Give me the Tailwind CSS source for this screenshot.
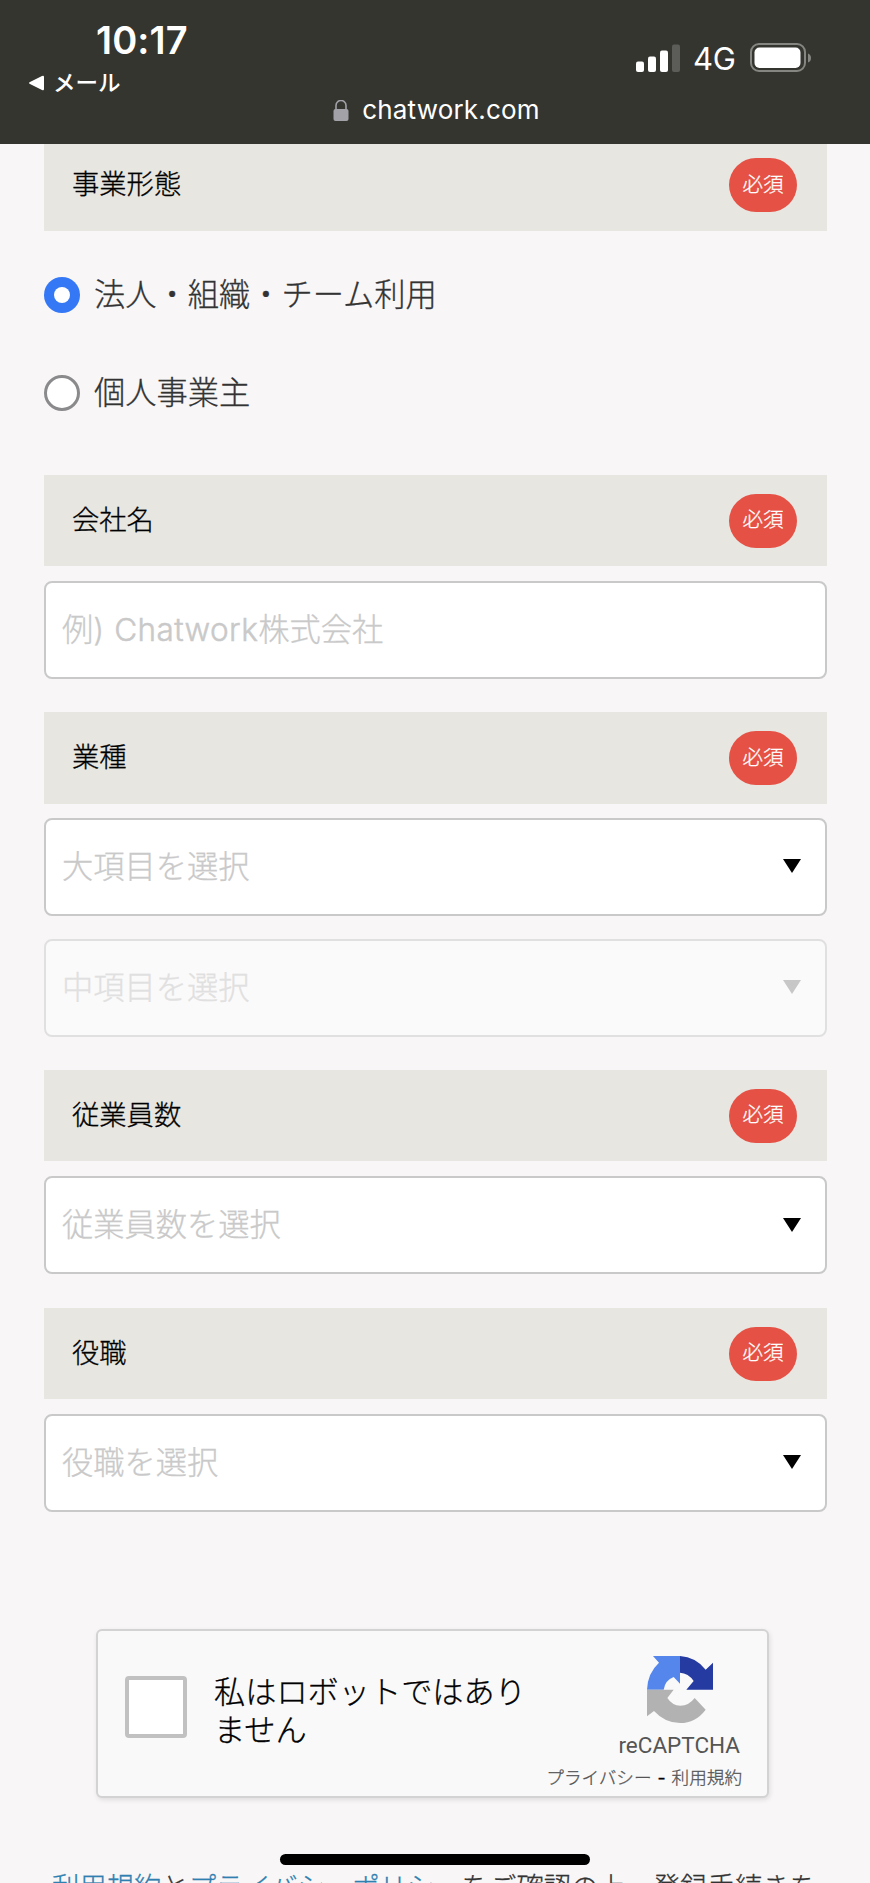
<!DOCTYPE html>
<html lang="ja">
<head>
<meta charset="utf-8">
<title>Chatwork</title>
<script src="https://cdn.jsdelivr.net/npm/@tailwindcss/browser@4"></script>
</head>
<body class="bg-[#f8f6f7]">
<div class="relative flex h-[1883px] w-[870px] flex-col overflow-hidden font-['Inter','Noto_Sans_CJK_JP',sans-serif] font-light text-black">

  <!-- status bar -->
  <header class="flex h-[144px] shrink-0 flex-col bg-[#353530] text-white">
    <div class="flex h-[92px] justify-between">
      <div class="flex flex-col pl-[28px] pt-[19px]">
        <span class="pl-[68px] text-[38px] leading-[42px] font-semibold tracking-[0.1px]">10:17</span>
        <span class="mt-[2px] flex items-center gap-[8px] text-[22.5px] leading-[40px] font-medium">
          <svg class="h-[16px] w-[17px]" viewBox="0 0 17 16"><path d="M2 7 14 1Q16 0 16 2V14Q16 16 14 15L2 9Q0 8 2 7Z" fill="#fff"/></svg>メール</span>
      </div>
      <div class="flex h-[30px] mt-[43px] items-center pr-[58px]">
        <svg class="h-[28px] w-[45px]" viewBox="0 0 45 28" fill="#fff"><rect x="1" y="17.500" width="8" height="10.500" rx="2"/><rect x="13" y="12.500" width="8" height="15.500" rx="2"/><rect x="25" y="6.500" width="8" height="21.500" rx="2"/><rect x="37" y="0.500" width="8" height="27.500" rx="2" fill="#5c5c58"/></svg>
        <span class="ml-[13px] w-[43px] pt-[2px] text-[31px] leading-[30px] font-normal tracking-[-0.2px]">4G</span>
        <svg class="ml-[14px] h-[30px] w-[62px]" viewBox="0 0 62 30"><rect x="1" y="1" width="54" height="27" rx="8" fill="none" stroke="#858581" stroke-width="2"/><rect x="4.500" y="4.500" width="46" height="20.500" rx="5" fill="#fff"/><path d="M58 10.500Q61 11.500 61 15T58 19.500Z" fill="#858581"/></svg>
      </div>
    </div>
    <div class="flex items-center justify-center gap-[13px] pl-[3px] text-[26px] leading-[36px] font-normal tracking-[0.2px]">
      <svg class="h-[21px] w-[16px]" viewBox="0 0 16 21"><path d="M3 10V5.500a5 5 0 0 1 10 0V10" fill="none" stroke="#a2a2a8" stroke-width="1.600"/><rect x="0.500" y="9" width="15" height="12" rx="2" fill="#a2a2a8"/></svg>
      <span>chatwork.com</span>
    </div>
  </header>

  <main class="flex flex-col pl-[44px] pr-[43px] [-webkit-text-stroke-width:0.3px]">
    <div class="flex h-[87px] items-start justify-between bg-[#e7e6e0] pl-[28px] pr-[30px] pt-[14px]">
      <span class="text-[27.300px] leading-[54px]">事業形態</span>
      <span class="flex h-[54px] w-[68px] items-center justify-center rounded-full bg-[#e55145] text-[20.500px] text-white">必須</span>
    </div>

    <label class="mt-[46px] flex h-[36px] items-center gap-[14px] text-[31.250px] leading-[36px] text-[#333]">
      <span class="flex size-[36px] items-center justify-center rounded-full bg-[#3478f6]"><span class="size-[16px] rounded-full bg-white"></span></span>法人・組織・チーム利用
    </label>
    <label class="mt-[62px] flex h-[36px] items-center gap-[14px] text-[31.250px] leading-[36px] text-[#333]">
      <span class="size-[36px] rounded-full border-[3px] border-[#8a8a8c] bg-white"></span>個人事業主
    </label>

    <div class="mt-[64px] flex h-[91px] items-center justify-between bg-[#e7e6e0] pl-[28px] pr-[30px]">
      <span class="text-[27.300px] leading-[54px]">会社名</span>
      <span class="flex h-[54px] w-[68px] items-center justify-center rounded-full bg-[#e55145] text-[20.500px] text-white">必須</span>
    </div>
    <div class="mt-[15px] flex h-[98px] items-center rounded-lg border-2 border-[#c9c9c9] bg-white pl-[16px] text-[31.250px] text-[#c9c9c9]">例) <span class="ml-[10px] text-[31.500px] tracking-[0.4px] [-webkit-text-stroke-width:0.5px]">Chatwork</span>株式会社</div>

    <div class="mt-[33px] flex h-[92px] items-center justify-between bg-[#e7e6e0] pl-[28px] pr-[30px]">
      <span class="text-[27.300px] leading-[54px]">業種</span>
      <span class="flex h-[54px] w-[68px] items-center justify-center rounded-full bg-[#e55145] text-[20.500px] text-white">必須</span>
    </div>
    <div class="mt-[14px] flex h-[98px] items-center justify-between rounded-lg border-2 border-[#c9c9c9] bg-white pl-[16px] pr-[24px] text-[31.250px] text-[#c9c9c9]">大項目を選択
      <svg class="mb-[2px] h-[14px] w-[18px]" viewBox="0 0 18 14"><path d="M0 0H18L9 14Z" fill="#000"/></svg></div>
    <div class="mt-[23px] flex h-[98px] items-center justify-between rounded-lg border-2 border-[#e1e0e0] bg-[#fbfafa] pl-[16px] pr-[24px] text-[31.250px] text-[#e0e0e0]">中項目を選択
      <svg class="mb-[2px] h-[14px] w-[18px]" viewBox="0 0 18 14"><path d="M0 0H18L9 14Z" fill="#c7c7c7"/></svg></div>

    <div class="mt-[33px] flex h-[91px] items-center justify-between bg-[#e7e6e0] pl-[28px] pr-[30px]">
      <span class="text-[27.300px] leading-[54px]">従業員数</span>
      <span class="flex h-[54px] w-[68px] items-center justify-center rounded-full bg-[#e55145] text-[20.500px] text-white">必須</span>
    </div>
    <div class="mt-[15px] flex h-[98px] items-center justify-between rounded-lg border-2 border-[#c9c9c9] bg-white pl-[16px] pr-[24px] text-[31.250px] text-[#c9c9c9]">従業員数を選択
      <svg class="h-[14px] w-[18px]" viewBox="0 0 18 14"><path d="M0 0H18L9 14Z" fill="#000"/></svg></div>

    <div class="mt-[34px] flex h-[91px] items-center justify-between bg-[#e7e6e0] pl-[28px] pr-[30px]">
      <span class="text-[27.300px] leading-[54px]">役職</span>
      <span class="flex h-[54px] w-[68px] items-center justify-center rounded-full bg-[#e55145] text-[20.500px] text-white">必須</span>
    </div>
    <div class="mt-[15px] flex h-[98px] items-center justify-between rounded-lg border-2 border-[#c9c9c9] bg-white pl-[16px] pr-[24px] text-[31.250px] text-[#c9c9c9]">役職を選択
      <svg class="mb-[2px] h-[14px] w-[18px]" viewBox="0 0 18 14"><path d="M0 0H18L9 14Z" fill="#000"/></svg></div>

    <!-- reCAPTCHA -->
    <div class="mt-[117px] ml-[52px] flex h-[169px] w-[673px] rounded-md border-2 border-[#d3d3d3] bg-[#f9f9f9] shadow-[1px_2px_5px_rgba(0,0,0,0.1)]">
      <span class="mt-[45px] ml-[27px] size-[62px] shrink-0 rounded-[4px] border-4 border-[#c1c1c1] bg-white"></span>
      <p class="mt-[42px] ml-[27px] w-[313px] shrink-0 whitespace-nowrap text-[31.200px] leading-[38px]">私はロボットではあり<br>ません</p>
      <div class="flex flex-1 flex-col items-end pr-[25px] pt-[25px] text-[#555]">
        <svg class="mr-[29px] h-[67px] w-[66px]" viewBox="82 77 198 201">
          <path d="M100 77H181V160L162 140Q136 150 132 178H82Q84 128 118 97Z" fill="#5586ec"/>
          <path d="M181 77Q228 80 258 118L280 97V178H200L222 152Q206 128 181 127Z" fill="#263ba2"/>
          <path d="M82 178H162L143 203Q158 226 182 226Q208 226 225 203L258 238Q228 278 181 278Q136 278 103 242L82 258Z" fill="#b2b2b2"/>
        </svg>
        <span class="mt-[8px] mr-[2px] font-[Roboto] text-[22.500px] leading-[28px] font-normal [-webkit-text-stroke-width:0px]">reCAPTCHA</span>
        <span class="mt-[5px] whitespace-nowrap text-[17.600px] leading-[28px]">プライバシー<span class="mx-[6px] font-normal text-black">-</span>利用規約</span>
      </div>
    </div>

    <p class="mt-[70px] ml-[8px] whitespace-nowrap text-[27.350px] leading-[40px] text-[#333]"><span class="text-[#2f7fb0]">利用規約</span>と<span class="text-[#2f7fb0]">プライバシーポリシー</span>をご確認の上、登録手続きを</p>
  </main>

  <!-- home indicator -->
  <div class="absolute top-[1854px] left-[280px] h-[11px] w-[310px] rounded-full bg-black"></div>
</div>
</body>
</html>
